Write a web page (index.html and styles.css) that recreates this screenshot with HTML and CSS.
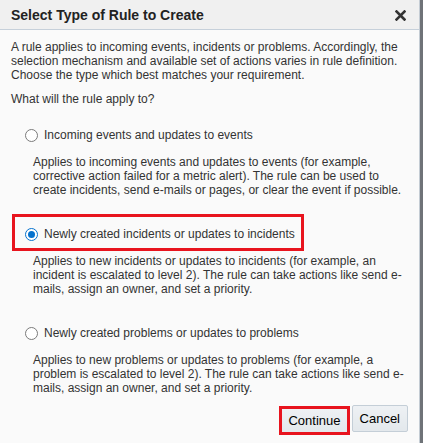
FILE: index.html
```html
<!DOCTYPE html>
<html>
<head>
<meta charset="utf-8">
<link rel="stylesheet" href="styles.css">
</head>
<body>
<div class="page">
  <div class="dialog">
    <div class="header">
      <span class="title">Select Type of Rule to Create</span>
      <svg class="close" width="11" height="11" viewBox="0 0 11 11"><path d="M1.5 1.5 L9.5 9.5 M9.5 1.5 L1.5 9.5" stroke="#333" stroke-width="2.6" stroke-linecap="square"/></svg>
    </div>
    <div class="content">
      <p class="intro">A rule applies to incoming events, incidents or problems. Accordingly, the selection mechanism and available set of actions varies in rule definition. Choose the type which best matches your requirement.</p>
      <p class="question">What will the rule apply to?</p>

      <div class="option">
        <div class="opt-box">
          <span class="radio"></span>
          <span class="opt-label">Incoming events and updates to events</span>
        </div>
        <p class="desc">Applies to incoming events and updates to events (for example, corrective action failed for a metric alert). The rule can be used to create incidents, send e-mails or pages, or clear the event if possible.</p>
      </div>

      <div class="option">
        <div class="opt-box highlight">
          <span class="radio checked"></span>
          <span class="opt-label">Newly created incidents or updates to incidents</span>
        </div>
        <p class="desc">Applies to new incidents or updates to incidents (for example, an incident is escalated to level 2). The rule can take actions like send e-mails, assign an owner, and set a priority.</p>
      </div>

      <div class="option option-last">
        <div class="opt-box">
          <span class="radio"></span>
          <span class="opt-label">Newly created problems or updates to problems</span>
        </div>
        <p class="desc">Applies to new problems or updates to problems (for example, a problem is escalated to level 2). The rule can take actions like send e-mails, assign an owner, and set a priority.</p>
      </div>

      <div class="buttons">
        <button class="btn primary">Continue</button>
        <button class="btn">Cancel</button>
      </div>
    </div>
  </div>
  <div class="backdrop"></div>
</div>
</body>
</html>
```
FILE: styles.css
```css
html, body {
  margin: 0;
  padding: 0;
}
body {
  font-family: "Liberation Sans", Arial, sans-serif;
  color: #333;
  background: #6f7378;
  width: 423px;
  height: 443px;
  overflow: hidden;
}
.page {
  display: flex;
  height: 443px;
}
.dialog {
  width: 419px;
  background: #fafafa;
  border-right: 1px solid #c4ccd4;
  display: flex;
  flex-direction: column;
}
.backdrop {
  flex: 1;
  background: #6f7378;
}
.header {
  height: 29px;
  background: #f0f0f0;
  border-bottom: 1px solid #c6d0da;
  display: flex;
  align-items: center;
  justify-content: space-between;
  padding: 0 13px 0 11px;
}
.title {
  font-weight: bold;
  font-size: 14px;
  color: #222;
}
.close {
  display: block;
  margin-top: 1px;
}
.content {
  padding: 10px 11px 0 11px;
  font-size: 12px;
  line-height: 14px;
}
p {
  margin: 0;
}
.intro {
  padding-right: 4px;
}
.question {
  margin-top: 10px;
  margin-bottom: 9px;
}
.option {
  margin-bottom: 17px;
}
.option.option-last {
  margin-bottom: 10px;
}
.opt-box {
  display: inline-flex;
  align-items: center;
  border: 3px solid transparent;
  margin-left: 1px;
  padding: 9px 6px 6px 10px;
  height: 16px;
  box-sizing: content-box;
}
.opt-box.highlight {
  border-color: #e8141e;
}
.radio {
  width: 11px;
  height: 11px;
  border: 1px solid #7a7a7a;
  border-radius: 50%;
  background: #fff;
  margin-right: 6px;
  position: relative;
  flex: none;
}
.radio.checked {
  border-color: #0572ce;
}
.radio.checked::after {
  content: "";
  position: absolute;
  left: 2px;
  top: 2px;
  width: 7px;
  height: 7px;
  border-radius: 50%;
  background: #0572ce;
}
.opt-label {
  font-size: 12px;
  line-height: 16px;
}
.desc {
  margin-top: 3px;
  margin-left: 22px;
}
.buttons {
  display: flex;
  justify-content: flex-end;
  align-items: flex-start;
  gap: 2px;
}
.btn {
  font-family: "Liberation Sans", Arial, sans-serif;
  font-size: 13px;
  color: #000;
  height: 27px;
  padding: 0 7px;
  border: 1px solid #c4ced7;
  border-radius: 2px;
  background: linear-gradient(#eef1f4, #e3e8ec);
}
.btn.primary {
  border: 3px solid #e8141e;
  border-radius: 0;
  padding: 0 6px;
  height: 29px;
  margin-top: 1px;
}
```
